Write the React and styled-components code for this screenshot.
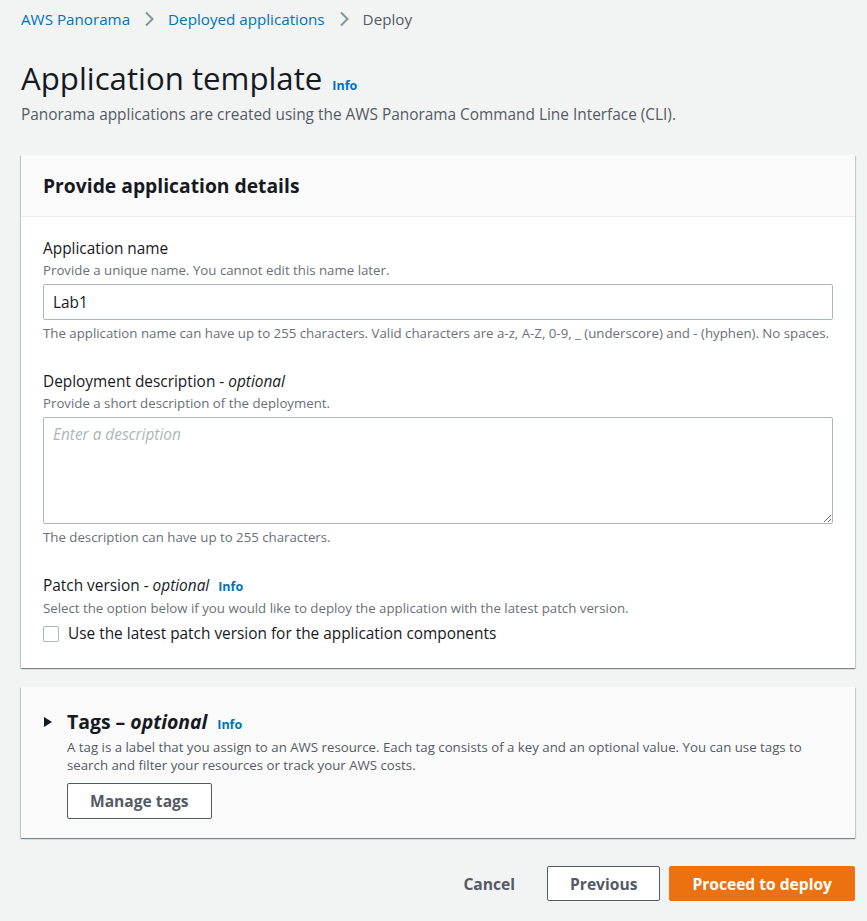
import React from "react";
import styled, { createGlobalStyle } from "styled-components";

const Global = createGlobalStyle`
  html, body { margin: 0; padding: 0; background: #f2f3f3; }
  body { font-family: "Open Sans", "Noto Sans", sans-serif; color: #16191f; -webkit-font-smoothing: antialiased; }
  * { box-sizing: border-box; }
`;

const Page = styled.div`
  padding: 9px 12px 20px 21px;
  min-height: 921px;
`;

const Breadcrumbs = styled.nav`
  display: flex;
  align-items: center;
  font-size: 15.2px;
  line-height: 20px;
  height: 20px;
`;

const Crumb = styled.a`
  color: ${(p) => (p.$current ? "#545b64" : "#0073bb")};
  text-decoration: none;
`;

const Chevron = styled.svg`
  width: 14px;
  height: 16px;
  margin: 0 12px 0 12px;
  flex: none;
`;

const TitleRow = styled.div`
  display: flex;
  align-items: baseline;
  margin-top: 31px;
`;

const Title = styled.h1`
  margin: 0;
  font-size: 31.2px;
  line-height: 36px;
  font-weight: 400;
`;

const Info = styled.a`
  color: #0073bb;
  font-size: 12.5px;
  font-weight: 700;
  text-decoration: none;
  margin-left: ${(p) => p.$gap || 10}px;
`;

const Subtitle = styled.p`
  margin: 9px 0 0;
  font-size: 15.4px;
  line-height: 20px;
  color: #545b64;
`;

const Container = styled.section`
  margin-top: ${(p) => p.$top || 0}px;
  background: ${(p) => p.$bg || "#ffffff"};
  box-shadow: 0 1px 1px 0 rgba(0, 28, 36, 0.3), 1px 1px 1px 0 rgba(0, 28, 36, 0.15),
    -1px 1px 1px 0 rgba(0, 28, 36, 0.15);
`;

const ContainerHeader = styled.div`
  background: #fafafa;
  border-bottom: 1px solid #eaeded;
  padding: 20px 22px 19px;
`;

const HeaderText = styled.h2`
  margin: 0;
  font-size: 19.3px;
  line-height: 22px;
  font-weight: 700;
`;

const ContainerBody = styled.div`
  padding: 21px 22px 23px;
  display: flex;
  flex-direction: column;
  gap: 30px;
`;

const Field = styled.div`
  display: flex;
  flex-direction: column;
`;

const LabelRow = styled.div`
  display: flex;
  align-items: baseline;
  line-height: 22px;
`;

const Label = styled.label`
  font-size: 15.4px;
  line-height: 22px;
  color: #16191f;
`;

const Optional = styled.i`
  font-style: italic;
`;

const Description = styled.div`
  font-size: 13.25px;
  line-height: 18px;
  color: #687078;
  margin-top: 1px;
`;

const Control = styled.div`
  margin-top: 5px;
  display: flex;
`;

const Input = styled.input`
  width: 100%;
  height: 36px;
  border: 1px solid #aab7b8;
  border-radius: 2px;
  padding: 0 9px;
  font-family: inherit;
  font-size: 15.4px;
  color: #16191f;
  background: #fff;
  outline: none;
`;

const TextArea = styled.textarea`
  width: 100%;
  height: 107px;
  border: 1px solid #aab7b8;
  border-radius: 2px;
  padding: 6px 9px;
  font-family: inherit;
  font-size: 15.4px;
  line-height: 22px;
  color: #16191f;
  background: #fff;
  outline: none;
  resize: vertical;
  display: block;
  &::placeholder {
    color: #aab7b8;
    font-style: italic;
  }
`;

const Constraint = styled.div`
  margin-top: 5px;
  font-size: 13.25px;
  line-height: 16px;
  color: #687078;
`;

const CheckRow = styled.label`
  display: flex;
  align-items: center;
  gap: 9px;
  margin-top: 6px;
  font-size: 15.4px;
  line-height: 22px;
  color: #16191f;
`;

const CheckBox = styled.span`
  width: 16px;
  height: 16px;
  border: 1px solid #aab7b8;
  border-radius: 2px;
  background: #fff;
  flex: none;
`;

const TagsBody = styled.div`
  padding: 23px 22px 19px;
  display: flex;
  align-items: flex-start;
`;

const Caret = styled.svg`
  width: 10px;
  height: 10px;
  margin-top: 7px;
  margin-right: 14px;
  flex: none;
`;

const TagsContent = styled.div`
  display: flex;
  flex-direction: column;
  align-items: flex-start;
`;

const TagsTitleRow = styled.div`
  display: flex;
  align-items: baseline;
`;

const TagsTitle = styled.h2`
  margin: 0;
  font-size: 19.4px;
  line-height: 24px;
  font-weight: 700;
`;

const TagsDescription = styled.p`
  margin: 4px 0 0;
  font-size: 13.25px;
  line-height: 18px;
  color: #545b64;
`;

const Button = styled.button`
  height: ${(p) => p.$h || 35}px;
  padding: 0 22px;
  border-radius: 2px;
  font-family: inherit;
  font-size: 15.6px;
  font-weight: 700;
  cursor: pointer;
  border: 1px solid
    ${(p) => (p.$variant === "primary" ? "#ec7211" : p.$variant === "link" ? "transparent" : "#545b64")};
  background: ${(p) => (p.$variant === "primary" ? "#ec7211" : p.$variant === "link" ? "transparent" : "#ffffff")};
  color: ${(p) => (p.$variant === "primary" ? "#ffffff" : "#545b64")};
  margin-top: ${(p) => p.$top || 0}px;
`;

const Footer = styled.div`
  display: flex;
  justify-content: flex-end;
  gap: 9px;
  margin-top: 28px;
`;

const ChevronIcon = () => (
  <Chevron viewBox="0 0 14 16">
    <path d="M4 1.5 L10.5 8 L4 14.5" fill="none" stroke="#879596" strokeWidth="2" />
  </Chevron>
);

export default function App() {
  return (
    <>
      <Global />
      <Page>
        <Breadcrumbs>
          <Crumb href="#">AWS Panorama</Crumb>
          <ChevronIcon />
          <Crumb href="#">Deployed applications</Crumb>
          <ChevronIcon />
          <Crumb $current>Deploy</Crumb>
        </Breadcrumbs>

        <TitleRow>
          <Title>Application template</Title>
          <Info href="#" $gap={10}>Info</Info>
        </TitleRow>
        <Subtitle>
          Panorama applications are created using the AWS Panorama Command Line Interface (CLI).
        </Subtitle>

        <Container $top={30}>
          <ContainerHeader>
            <HeaderText>Provide application details</HeaderText>
          </ContainerHeader>
          <ContainerBody>
            <Field>
              <Label>Application name</Label>
              <Description>Provide a unique name. You cannot edit this name later.</Description>
              <Control>
                <Input defaultValue="Lab1" />
              </Control>
              <Constraint>
                The application name can have up to 255 characters. Valid characters are a-z, A-Z, 0-9, _
                (underscore) and - (hyphen). No spaces.
              </Constraint>
            </Field>

            <Field>
              <Label>
                Deployment description - <Optional>optional</Optional>
              </Label>
              <Description>Provide a short description of the deployment.</Description>
              <Control>
                <TextArea placeholder="Enter a description" />
              </Control>
              <Constraint>The description can have up to 255 characters.</Constraint>
            </Field>

            <Field>
              <LabelRow>
                <Label>
                  Patch version - <Optional>optional</Optional>
                </Label>
                <Info href="#" $gap={9}>Info</Info>
              </LabelRow>
              <Description>
                Select the option below if you would like to deploy the application with the latest patch
                version.
              </Description>
              <CheckRow>
                <CheckBox />
                Use the latest patch version for the application components
              </CheckRow>
            </Field>
          </ContainerBody>
        </Container>

        <Container $top={19} $bg="#fafafa">
          <TagsBody>
            <Caret viewBox="0 0 10 10">
              <path d="M1 0 L9 5 L1 10 Z" fill="#16191f" />
            </Caret>
            <TagsContent>
              <TagsTitleRow>
                <TagsTitle>
                  Tags – <Optional>optional</Optional>
                </TagsTitle>
                <Info href="#" $gap={10}>Info</Info>
              </TagsTitleRow>
              <TagsDescription>
                A tag is a label that you assign to an AWS resource. Each tag consists of a key and an optional
                value. You can use tags to search and filter your resources or track your AWS costs.
              </TagsDescription>
              <Button $top={9} $h={36}>Manage tags</Button>
            </TagsContent>
          </TagsBody>
        </Container>

        <Footer>
          <Button $variant="link">Cancel</Button>
          <Button>Previous</Button>
          <Button $variant="primary">Proceed to deploy</Button>
        </Footer>
      </Page>
    </>
  );
}
